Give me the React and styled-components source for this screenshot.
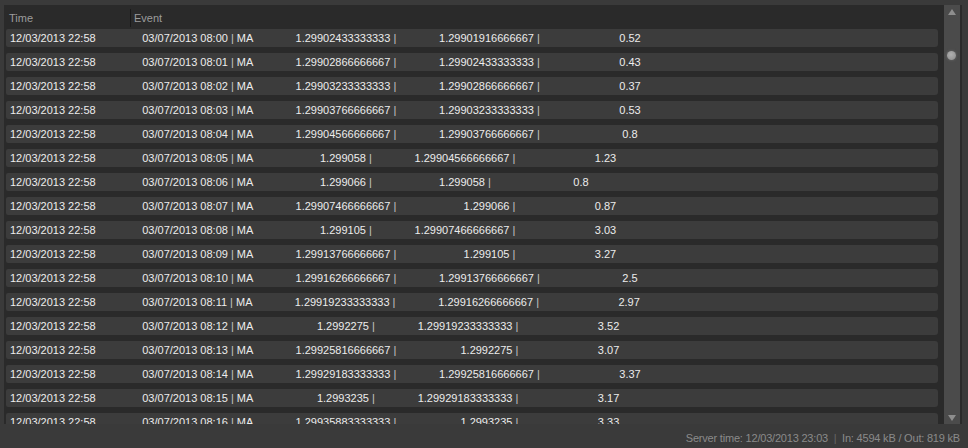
import React from "react";
import styled, { createGlobalStyle } from "styled-components";

const Global = createGlobalStyle`
  html, body { margin: 0; padding: 0; background: #3a3a3a; }
  body { font-family: "Liberation Sans", Arial, sans-serif; font-size: 11px; }
  * { box-sizing: border-box; }
`;

const Page = styled.div`
  width: 968px;
  height: 448px;
  display: flex;
  flex-direction: column;
  background: #3a3a3a;
  overflow: hidden;
`;

const Panel = styled.div`
  display: flex;
  height: 419px;
  flex: none;
  margin: 5px 6px 0 4px;
  border-right: 2px solid #2a2a2a;
`;

const GridArea = styled.div`
  flex: 1;
  display: flex;
  flex-direction: column;
  background: #2a2a2a;
  overflow: hidden;
  padding: 0 6px 0 2px;
`;

const Header = styled.div`
  display: grid;
  grid-template-columns: 124px 1fr;
  height: 22px;
  flex: none;
  align-items: center;
  padding-top: 3px;
`;

const HeaderCell = styled.div`
  color: #9c9c9c;
  height: 18px;
  line-height: 18px;
  padding-left: 3px;
  border-left: ${(p) => (p.$sep ? "1px solid #1a1a1a" : "none")};
`;

const Body = styled.div`
  display: flex;
  flex-direction: column;
  gap: 6px;
  padding-top: 2px;
`;

const Row = styled.div`
  display: grid;
  grid-template-columns: 124px 1fr;
  height: 18px;
  flex: none;
  align-items: center;
  background: #3c3c3c;
  border-radius: 2px 3px 3px 2px;
  color: #ececec;
`;

const TimeCell = styled.div`
  padding-left: 4px;
`;

const EventCell = styled.div`
  white-space: pre;
`;

const Sep = styled.span`
  color: #c4c4c4;
`;

const Scrollbar = styled.div`
  width: 16px;
  flex: none;
  background: #4b4b4b;
  display: flex;
  flex-direction: column;
  align-items: center;
  justify-content: space-between;
  padding: 4px 0 3px;
  position: relative;
`;

const Arrow = styled.div`
  width: 0;
  height: 0;
  border-left: 4px solid transparent;
  border-right: 4px solid transparent;
  ${(p) =>
    p.$up
      ? "border-bottom: 6px solid #8e8e8e;"
      : "border-top: 6px solid #8e8e8e;"}
`;

const Thumb = styled.div`
  position: absolute;
  top: 46px;
  left: 3px;
  width: 9px;
  height: 9px;
  border-radius: 50%;
  background: radial-gradient(circle at 45% 40%, #b0b0b0, #8a8a8a);
  box-shadow: 0 0 2px 1px #5a5a5a;
`;

const StatusBar = styled.div`
  flex: 1;
  display: flex;
  justify-content: flex-end;
  align-items: center;
  padding: 3px 8px 0 0;
  color: #8a8a8a;
  white-space: pre;
  letter-spacing: -0.2px;
`;

const StatusSep = styled.span`
  color: #666;
`;

const data = [
  ["08:00", "1.29902433333333", "1.29901916666667", "0.52"],
  ["08:01", "1.29902866666667", "1.29902433333333", "0.43"],
  ["08:02", "1.29903233333333", "1.29902866666667", "0.37"],
  ["08:03", "1.29903766666667", "1.29903233333333", "0.53"],
  ["08:04", "1.29904566666667", "1.29903766666667", "0.8"],
  ["08:05", "1.299058", "1.29904566666667", "1.23"],
  ["08:06", "1.299066", "1.299058", "0.8"],
  ["08:07", "1.29907466666667", "1.299066", "0.87"],
  ["08:08", "1.299105", "1.29907466666667", "3.03"],
  ["08:09", "1.29913766666667", "1.299105", "3.27"],
  ["08:10", "1.29916266666667", "1.29913766666667", "2.5"],
  ["08:11", "1.29919233333333", "1.29916266666667", "2.97"],
  ["08:12", "1.2992275", "1.29919233333333", "3.52"],
  ["08:13", "1.29925816666667", "1.2992275", "3.07"],
  ["08:14", "1.29929183333333", "1.29925816666667", "3.37"],
  ["08:15", "1.2993235", "1.29929183333333", "3.17"],
  ["08:16", "1.29935883333333", "1.2993235", "3.33"],
];

const pad = (s, n) => s.padStart(n, " ");

export default function App() {
  return (
    <>
      <Global />
      <Page>
        <Panel>
          <GridArea>
            <Header>
              <HeaderCell>Time</HeaderCell>
              <HeaderCell $sep>Event</HeaderCell>
            </Header>
            <Body>
              {data.map(([t, a, b, c]) => (
                <Row key={t}>
                  <TimeCell>12/03/2013 22:58</TimeCell>
                  <EventCell>
                    {pad(`03/07/2013 ${t}`, 20)} <Sep>|</Sep> MA{pad(a, 30)}{" "}
                    <Sep>|</Sep>{pad(b, 30)} <Sep>|</Sep>{pad(c, 30)}
                  </EventCell>
                </Row>
              ))}
            </Body>
          </GridArea>
          <Scrollbar>
            <Arrow $up />
            <Thumb />
            <Arrow />
          </Scrollbar>
        </Panel>
        <StatusBar>
          Server time: 12/03/2013 23:03  <StatusSep>|</StatusSep>  In: 4594 kB / Out: 819 kB
        </StatusBar>
      </Page>
    </>
  );
}
